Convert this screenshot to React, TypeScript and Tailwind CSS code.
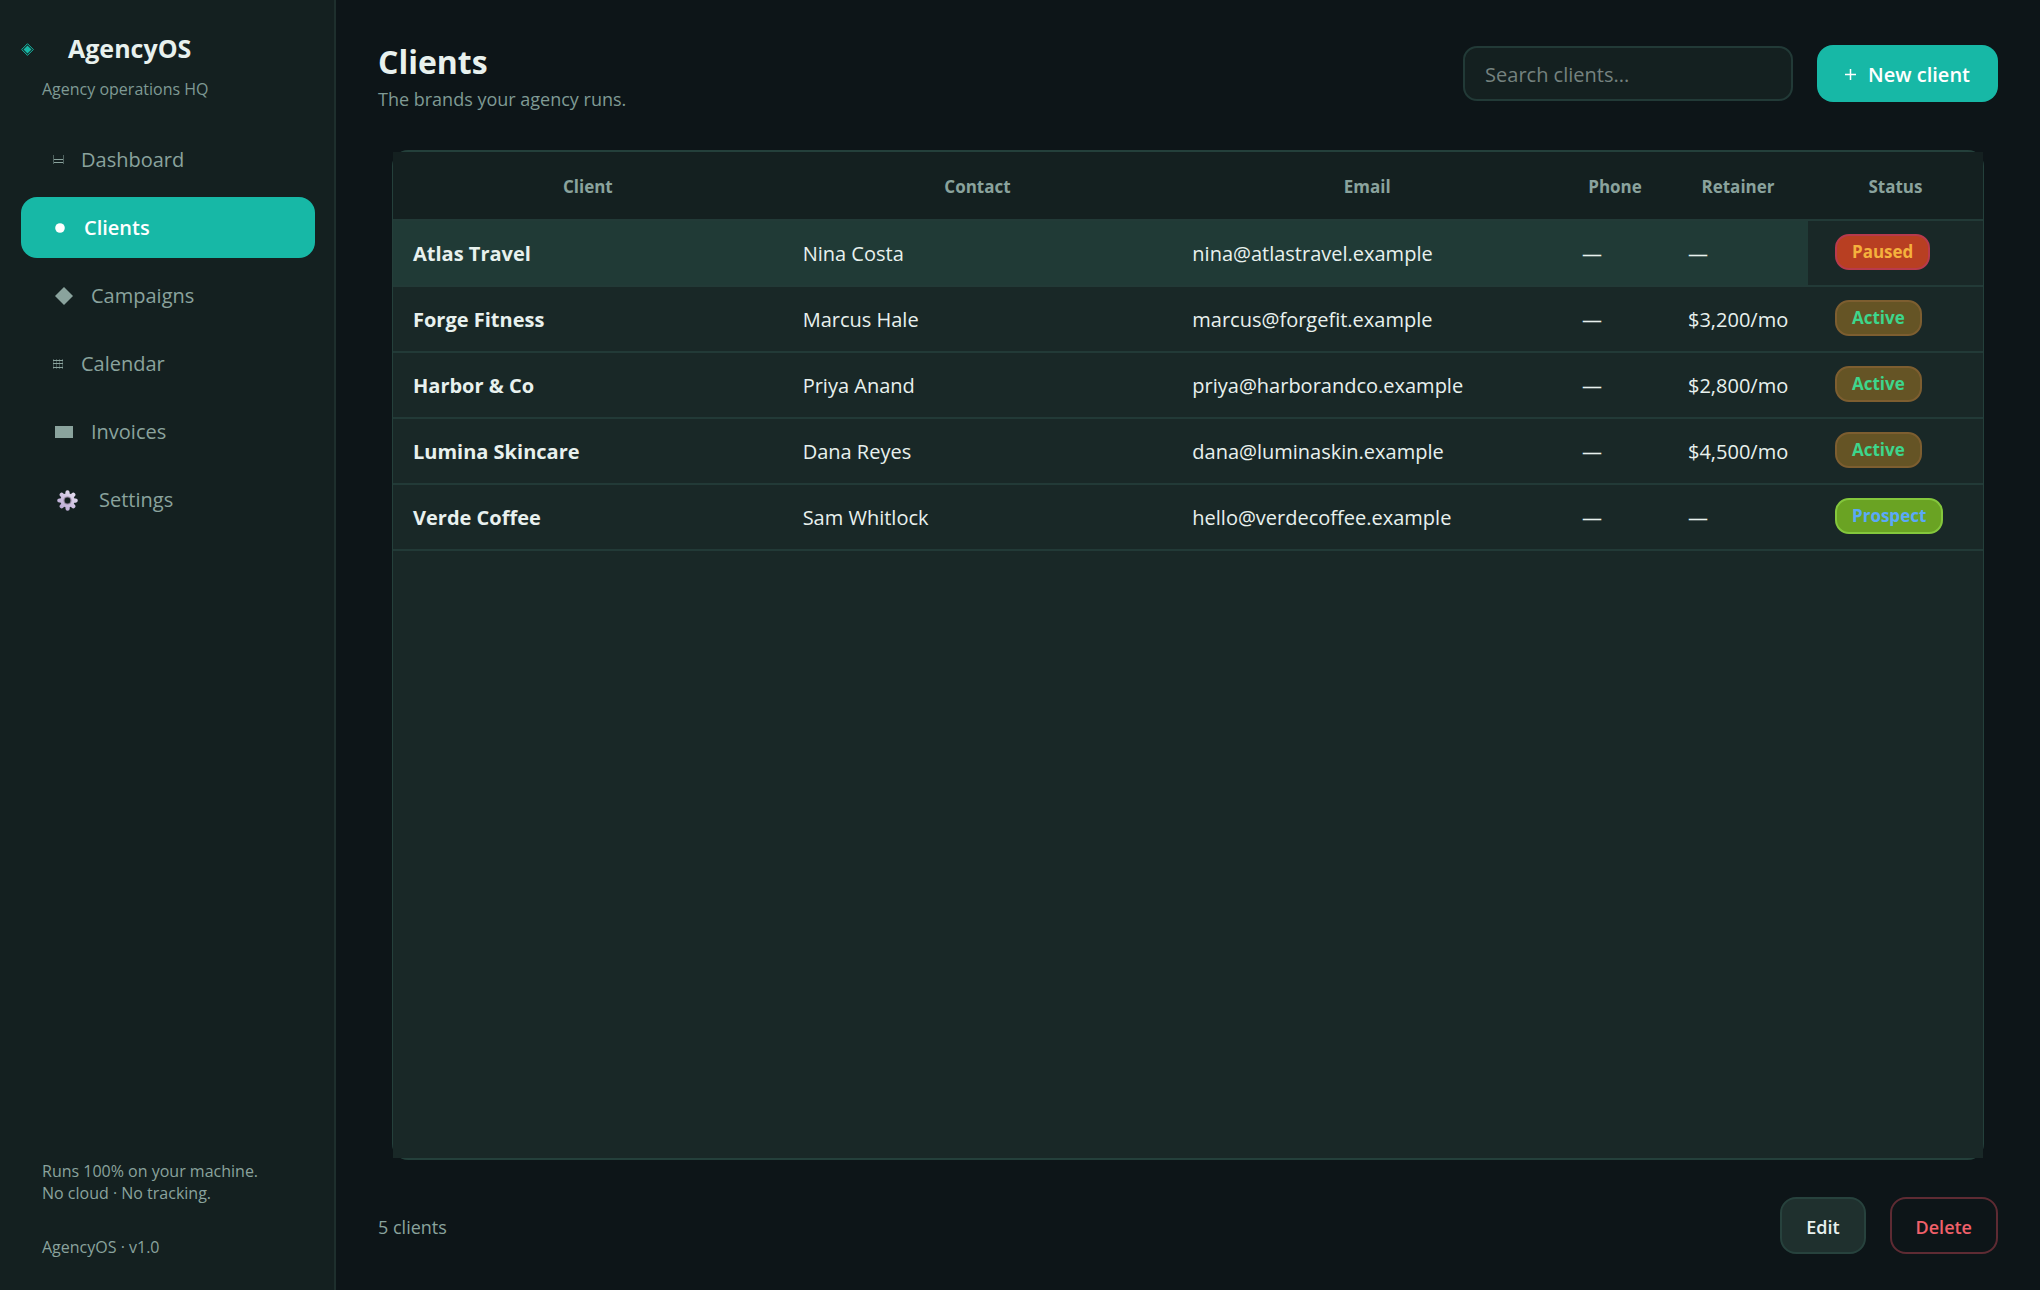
import React from 'react';

type Status = 'Paused' | 'Active' | 'Prospect';

interface Client {
  name: string;
  contact: string;
  email: string;
  phone: string;
  retainer: string;
  status: Status;
}

const CLIENTS: Client[] = [
  { name: 'Atlas Travel', contact: 'Nina Costa', email: 'nina@atlastravel.example', phone: '—', retainer: '—', status: 'Paused' },
  { name: 'Forge Fitness', contact: 'Marcus Hale', email: 'marcus@forgefit.example', phone: '—', retainer: '$3,200/mo', status: 'Active' },
  { name: 'Harbor & Co', contact: 'Priya Anand', email: 'priya@harborandco.example', phone: '—', retainer: '$2,800/mo', status: 'Active' },
  { name: 'Lumina Skincare', contact: 'Dana Reyes', email: 'dana@luminaskin.example', phone: '—', retainer: '$4,500/mo', status: 'Active' },
  { name: 'Verde Coffee', contact: 'Sam Whitlock', email: 'hello@verdecoffee.example', phone: '—', retainer: '—', status: 'Prospect' },
];

const BADGE: Record<Status, string> = {
  Paused: 'bg-[#b83f22] border-[#b83a4c] text-[#f5b13d]',
  Active: 'bg-[#655425] border-[#7d5e30] text-[#3dd68c]',
  Prospect: 'bg-[#6aa323] border-[#84c73c] text-[#5aa9f8]',
};

const DashboardIcon = () => (
  <svg className="w-[11px] h-[10px]" viewBox="0 0 11 10" fill="none" stroke="currentColor" aria-hidden="true">
    <path d="M.5 0v9M10.500 0v9" opacity=".5" />
    <path d="M1 4.500h9M1 7.500h9" />
  </svg>
);

const ClientsIcon = () => (
  <svg className="w-[10px] h-[10px]" viewBox="0 0 10 10" fill="currentColor" aria-hidden="true">
    <circle cx="5" cy="5" r="4.800" />
  </svg>
);

const CampaignsIcon = () => (
  <svg className="w-[18px] h-[18px]" viewBox="0 0 18 18" fill="currentColor" aria-hidden="true">
    <path d="M9 0l9 9-9 9-9-9z" />
  </svg>
);

const CalendarIcon = () => (
  <svg className="w-[10px] h-[10px]" viewBox="0 0 10 10" fill="none" stroke="currentColor" aria-hidden="true">
    <path d="M.5 0v10M3.500 0v10M6.500 0v10M9.500 0v10" opacity=".4" />
    <path d="M0 1.500h10M0 4.500h10M0 8.500h10" />
  </svg>
);

const InvoicesIcon = () => (
  <svg className="w-[18px] h-[12px]" viewBox="0 0 18 12" fill="currentColor" aria-hidden="true">
    <path d="M0 0h18v12H0z" />
  </svg>
);

const SettingsIcon = () => (
  <svg className="w-[21px] h-[21px]" viewBox="0 0 21 21" aria-hidden="true">
    <defs>
      <linearGradient id="gear" gradientUnits="userSpaceOnUse" x1="18" y1="2" x2="3" y2="19">
        <stop offset="0" stopColor="#e6dff0" />
        <stop offset="1" stopColor="#b9a6d3" />
      </linearGradient>
    </defs>
    <g stroke="url(#gear)" strokeWidth="4.200" strokeLinecap="round">
      <path d="M10.500 2.300L10.600 18.700M2.300 10.500L18.700 10.600M4.700 4.700l11.600 11.600M16.300 4.700L4.700 16.300" />
    </g>
    <circle cx="10.500" cy="10.500" r="7.200" fill="url(#gear)" />
    <circle cx="10.500" cy="10.500" r="4" fill="#94869f" />
    <circle cx="10.500" cy="10.500" r="2.900" fill="#142020" />
  </svg>
);

const NAV = [
  { label: 'Dashboard', icon: <DashboardIcon />, space: 'pl-8 gap-[17px]' },
  { label: 'Clients', icon: <ClientsIcon />, space: 'pl-[34px] gap-[19px]' },
  { label: 'Campaigns', icon: <CampaignsIcon />, space: 'pl-[34px] gap-[18px]' },
  { label: 'Calendar', icon: <CalendarIcon />, space: 'pl-8 gap-[18px]' },
  { label: 'Invoices', icon: <InvoicesIcon />, space: 'pl-[34px] gap-[18px]' },
  { label: 'Settings', icon: <SettingsIcon />, space: 'pl-9 gap-[21px]' },
];

const Sidebar = () => (
  <aside className="w-[336px] flex-shrink-0 flex flex-col bg-[#142020] border-r-2 border-[#1e2f2d] pl-[21px] pr-[19px] pt-8 pb-8">
    <div className="flex items-center gap-[34px] h-[34px]">
      <svg className="w-[13px] h-[13px] text-[#17b8a6]" viewBox="0 0 13 13" fill="none" aria-hidden="true">
        <path d="M6.500 .7l5.800 5.800-5.800 5.800L.7 6.500z" stroke="currentColor" />
        <path d="M6.500 2.500l4 4-4 4-4-4z" fill="currentColor" />
      </svg>
      <span className="text-[25px] font-bold text-[#e8f1ee]">AgencyOS</span>
    </div>
    <p className="pl-[21px] mt-3 text-base leading-[22px] text-[#7f9a94]">Agency operations HQ</p>

    <nav className="mt-[29px] flex flex-col gap-[7px]">
      {NAV.map(item => {
        const active = item.label === 'Clients';
        return (
          <a
            key={item.label}
            href="#"
            aria-current={active ? 'page' : undefined}
            className={`h-[61px] pt-px flex items-center rounded-2xl text-xl ${item.space} ${
              active ? 'bg-[#17b8a6] text-white font-semibold' : 'text-[#8aa39d]'
            }`}
          >
            {item.icon}
            <span>{item.label}</span>
          </a>
        );
      })}
    </nav>

    <div className="mt-auto pl-[21px] text-base leading-[22px] text-[#8aa39d]">
      <p>
        Runs 100% on your machine.
        <br />
        No cloud · No tracking.
      </p>
      <p className="mt-8">AgencyOS · v1.0</p>
    </div>
  </aside>
);

const TH = 'pt-0.5 font-bold text-[17px] text-center';
const TD = 'px-5 pt-0.5 border-b-2 border-[#223a37]';

const ClientTable = () => (
  <div className="flex-1 mx-[14px] flex flex-col rounded-2xl border-x border-y-2 border-[#24403b]">
    <div className="flex-1 bg-[#192827]">
      <table className="w-full table-fixed border-separate border-spacing-0 text-xl text-[#e8f1ee]">
        <colgroup>
          <col />
          <col />
          <col />
          <col className="w-[106px]" />
          <col className="w-[140px]" />
          <col className="w-[175px]" />
        </colgroup>
        <thead>
          <tr className="h-[69px] bg-[#142020] text-[#8aa39d]">
            {['Client', 'Contact', 'Email', 'Phone', 'Retainer', 'Status'].map(h => (
              <th key={h} scope="col" className={`${TH} border-b-2 border-[#223a37]`}>{h}</th>
            ))}
          </tr>
        </thead>
        <tbody>
          {CLIENTS.map((c, i) => {
            const cell = `${TD} ${i === 0 ? 'bg-[#203a36]' : ''}`;
            return (
              <tr key={c.name} className="h-[66px]">
                <td className={`${cell} font-bold`}>{c.name}</td>
                <td className={cell}>{c.contact}</td>
                <td className={cell}>{c.email}</td>
                <td className={cell}>{c.phone}</td>
                <td className={cell}>{c.retainer}</td>
                <td className="pl-[27px] pb-0.5 border-b-2 border-[#223a37]">
                  <span className={`inline-flex items-center h-9 px-[15px] rounded-[14px] border-2 align-middle text-[17px] font-bold ${BADGE[c.status]}`}>
                    {c.status}
                  </span>
                </td>
              </tr>
            );
          })}
        </tbody>
      </table>
    </div>
  </div>
);

export default function App() {
  return (
    <div className="min-h-screen flex bg-[#0d1518] font-['Open_Sans','Noto_Sans',sans-serif]">
      <Sidebar />
      <main className="flex-1 min-w-0 flex flex-col px-[42px] pt-10 pb-9">
        <header className="flex justify-between mb-9">
          <div>
            <h1 className="text-[32px] leading-[44px] font-bold text-[#e8f1ee]">Clients</h1>
            <p className="text-lg leading-[30px] text-[#7f9a94]">The brands your agency runs.</p>
          </div>
          <div className="flex items-center gap-6 h-[57px] mt-[5px]">
            <input
              type="search"
              aria-label="Search clients"
              placeholder="Search clients..."
              className="w-[330px] h-[55px] px-5 pt-0.5 rounded-[14px] border-2 border-[#223a37] bg-[#142020] text-xl text-[#e8f1ee] placeholder:text-[#75827f] outline-none"
            />
            <button type="button" className="h-[57px] px-7 pt-0.5 flex items-center gap-3 rounded-2xl bg-[#17b8a6] text-white text-xl font-semibold">
              <svg className="w-[11px] h-[11px]" viewBox="0 0 11 11" stroke="currentColor" strokeWidth="1.500" aria-hidden="true">
                <path d="M5.500 0v11M0 5.500h11" />
              </svg>
              New client
            </button>
          </div>
        </header>

        <ClientTable />

        <footer className="flex items-center justify-between mt-[37px]">
          <span className="pt-0.5 text-lg text-[#8aa39d]">5 clients</span>
          <div className="flex gap-6">
            <button type="button" className="h-[57px] px-6 pt-0.5 rounded-2xl border-2 border-[#27423d] bg-[#1f302e] text-[#e8f1ee] text-lg font-semibold">
              Edit
            </button>
            <button type="button" className="h-[57px] px-6 pt-0.5 rounded-2xl border-2 border-[#5e2b33] text-[#f0606a] text-lg font-semibold">
              Delete
            </button>
          </div>
        </footer>
      </main>
    </div>
  );
}
